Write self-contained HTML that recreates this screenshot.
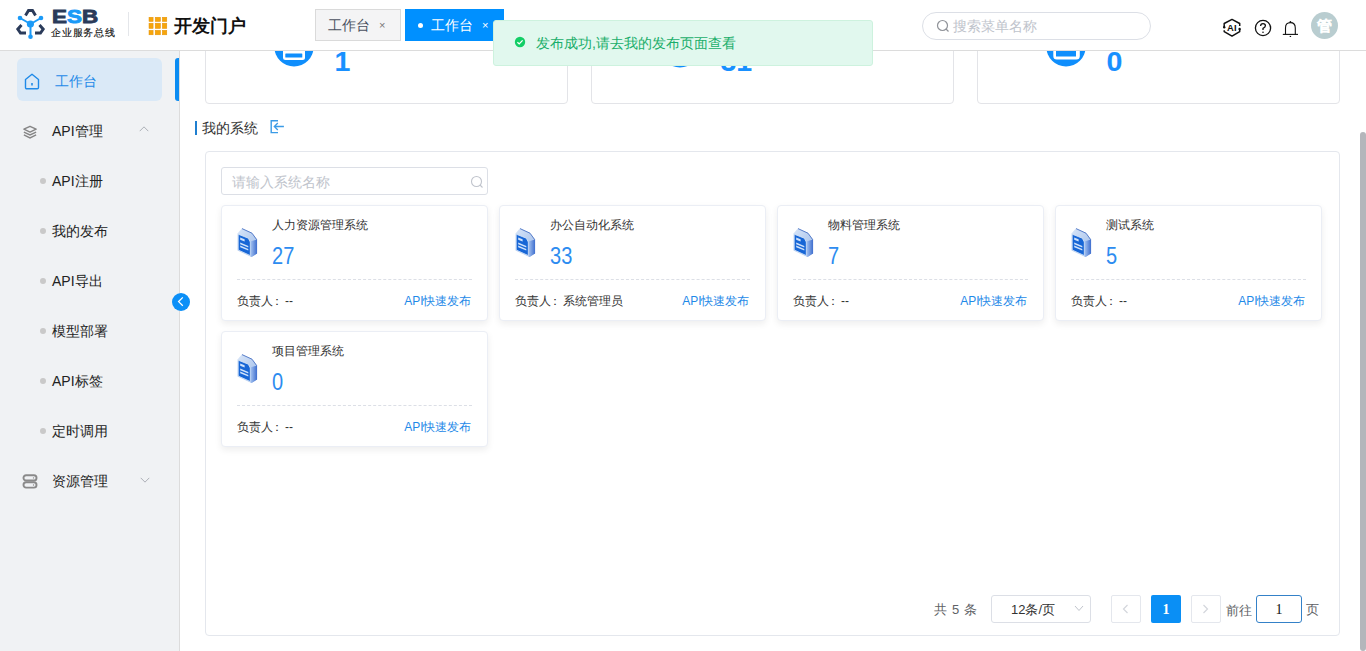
<!DOCTYPE html>
<html><head><meta charset="utf-8">
<style>
*{box-sizing:border-box;margin:0;padding:0}
html,body{width:1366px;height:651px;overflow:hidden;background:#fff;font-family:"Liberation Sans",sans-serif;color:#303133}
.abs{position:absolute}
#header{position:absolute;left:0;top:0;width:1366px;height:51px;background:#fff;border-bottom:1px solid #dcdcdc;z-index:5}
#side{position:absolute;left:0;top:51px;width:180px;height:600px;background:#f0f2f4;border-right:1px solid #dcdcdc}
#main{position:absolute;left:180px;top:51px;width:1186px;height:600px;overflow:hidden;background:#fff}
.menu{position:absolute;left:0;width:179px;height:50px;font-size:14px;color:#222;line-height:50px}
.menu .t{position:absolute;left:52px;top:0}
.sub .dot{position:absolute;left:40px;top:22px;width:6px;height:6px;border-radius:50%;background:#c9c9c9}
.stat{position:absolute;top:-40px;width:363px;height:93px;border:1px solid #e3e4e8;border-radius:4px;background:#fff}
.stat .num{position:absolute;left:128.5px;top:33.5px;font-size:28.5px;-webkit-text-stroke:0.1px currentColor;font-weight:bold;color:#1890ff;line-height:30px}
.card{position:absolute;width:267px;height:116px;border:1px solid #ebeef5;border-radius:4px;background:#fff;box-shadow:0 3px 7px rgba(0,0,0,0.07)}
.card .ti{position:absolute;left:50px;top:11px;font-size:12px;color:#333;line-height:16px}
.card .n{position:absolute;left:50px;top:36px;font-size:23px;color:#2d8cf0;line-height:28px;transform:scaleX(0.87);transform-origin:0 0}
.card .dash{position:absolute;left:15px;top:73px;width:235px;border-top:1px dashed #dcdfe6}
.card .f1{position:absolute;left:15px;top:87px;font-size:12px;color:#333;line-height:16px}
.card .f2{position:absolute;right:15.5px;top:87px;font-size:12px;color:#1f8ae8;line-height:16px}
.card .ic{position:absolute;left:15px;top:22px}
</style></head><body>
<div id="header">
  <!-- logo -->
  <svg class="abs" style="left:14px;top:7px" width="34" height="34" viewBox="14 7 34 34">
    <g fill="none" stroke="#2b3b5a" stroke-width="2.9" stroke-linejoin="miter">
      <path d="M25.5 15.5 L28.5 10.5 L32.5 10.5 L35.5 15.5"/>
      <path d="M21.5 25 L17.8 29.2 L20.5 33 L26 33"/>
      <path d="M39.5 25 L43.2 29.2 L40.5 33 L35 33"/>
    </g>
    <g stroke="#1b9af7" stroke-width="2" fill="#1b9af7">
      <line x1="20" y1="18" x2="30.5" y2="24"/>
      <line x1="41" y1="18" x2="30.5" y2="24"/>
      <line x1="30.5" y1="24" x2="30.5" y2="36.5"/>
      <circle cx="20" cy="18" r="2.3" stroke="none"/>
      <circle cx="41" cy="18" r="2.3" stroke="none"/>
      <circle cx="30.4" cy="24" r="3.6" stroke="none"/>
      <circle cx="30.5" cy="36.8" r="2.3" stroke="none"/>
    </g>
  </svg>
  <div class="abs" style="left:51.5px;top:5.5px;font-size:19px;font-weight:bold;letter-spacing:0px;color:#2b3b5a;line-height:21px;-webkit-text-stroke:0.9px currentColor;transform:scaleX(1.18);transform-origin:0 0">E<span style="color:#1b9af7">S</span>B</div><!---->
  <div class="abs" style="left:51px;top:26.5px;font-size:10.4px;letter-spacing:0.75px;font-weight:normal;color:#111;line-height:12px;-webkit-text-stroke:0.15px #111">企业服务总线</div>
  <div class="abs" style="left:128px;top:12px;width:1px;height:24px;background:#e4e6ea"></div>
  <svg class="abs" style="left:148px;top:17px" width="20" height="19" viewBox="0 0 20 19"><g fill="#f7a50a" stroke="#e3920c" stroke-width="0.5"><rect x="1" y="0.2" width="4.1" height="4.3"/><rect x="7.2" y="0.2" width="5.3" height="4.3"/><rect x="14.3" y="0.2" width="4.5" height="4.3"/><rect x="1" y="6.2" width="4.1" height="5.3"/><rect x="7.2" y="6.2" width="5.3" height="5.3"/><rect x="14.3" y="6.2" width="4.5" height="5.3"/><rect x="1" y="13.3" width="4.1" height="4.5"/><rect x="7.2" y="13.3" width="5.3" height="4.5"/><rect x="14.3" y="13.3" width="4.5" height="4.5"/></g></svg>
  <div class="abs" style="left:174px;top:14px;font-size:18px;font-weight:bold;color:#111;line-height:24px">开发门户</div>
  <!-- tabs -->
  <div class="abs" style="left:315px;top:9px;width:86px;height:32px;background:#f4f4f5;border:1px solid #dadada"></div>
  <div class="abs" style="left:328px;top:16px;font-size:14px;color:#495060;line-height:18px">工作台</div>
  <div class="abs" style="left:379px;top:16px;font-size:11px;color:#777;line-height:18px">×</div>
  <div class="abs" style="left:405px;top:9px;width:99px;height:32px;background:#0090ff"></div>
  <div class="abs" style="left:418px;top:23px;width:5px;height:5px;border-radius:50%;background:#fff"></div>
  <div class="abs" style="left:431px;top:16px;font-size:14px;color:#fff;line-height:18px">工作台</div>
  <div class="abs" style="left:482px;top:16px;font-size:11px;color:#fff;line-height:18px">×</div>
  <!-- search -->
  <div class="abs" style="left:922px;top:12px;width:229px;height:28px;border:1px solid #dcdfe6;border-radius:14px"></div>
  <svg class="abs" style="left:936px;top:19px" width="14" height="14" viewBox="0 0 14 14"><circle cx="6.5" cy="6.5" r="5" fill="none" stroke="#909399" stroke-width="1.2"/><line x1="10" y1="10" x2="12.5" y2="12.5" stroke="#909399" stroke-width="1.2"/></svg>
  <div class="abs" style="left:953px;top:17px;font-size:14px;color:#c0c4cc;line-height:18px">搜索菜单名称</div>
  <!-- icons -->
  <svg class="abs" style="left:1222px;top:18px" width="20" height="20" viewBox="0 0 20 20">
    <path d="M2.2 9.2 L2.2 5.5 L10 1.4 L17.7 5.5 L17.7 7.9" fill="none" stroke="#111" stroke-width="1.5" stroke-linejoin="round"/>
    <path d="M17.7 11 L17.7 13.6 L10 18.1 L2.2 13.6 L2.2 12.2" fill="none" stroke="#111" stroke-width="1.5" stroke-linejoin="round"/>
    <circle cx="2.2" cy="9.3" r="1.2" fill="#111"/><circle cx="17.6" cy="11" r="1.2" fill="#111"/>
    <text x="9.8" y="12.9" text-anchor="middle" font-family="Liberation Sans" font-weight="bold" font-size="9.4" fill="#111">AI</text>
  </svg>
  <svg class="abs" style="left:1254px;top:19px" width="18" height="18" viewBox="0 0 18 18"><circle cx="9" cy="9" r="7.6" fill="none" stroke="#111" stroke-width="1.3"/><path d="M6.6 7 Q6.6 4.6 9 4.6 Q11.4 4.6 11.4 6.8 Q11.4 8.4 9 9.4 L9 11" fill="none" stroke="#111" stroke-width="1.3"/><circle cx="9" cy="13.2" r="0.8" fill="#111"/></svg>
  <svg class="abs" style="left:1282px;top:20px" width="17" height="18" viewBox="0 0 17 18"><path d="M3.5 14.4 L3.5 8 Q3.5 2.6 8.4 2.6 Q13.3 2.6 13.3 8 L13.3 14.4" fill="none" stroke="#111" stroke-width="1.1"/><line x1="0.8" y1="14.4" x2="16" y2="14.4" stroke="#111" stroke-width="1.1"/><circle cx="8.4" cy="2" r="0.9" fill="#111"/><rect x="7.7" y="15.9" width="1.4" height="1.1" fill="#111"/></svg>
  <div class="abs" style="left:1311px;top:12px;width:27px;height:27px;border-radius:50%;background:#b9cdd0;color:#fff;font-size:15px;font-weight:bold;text-align:center;line-height:28px;-webkit-text-stroke:0.2px #fff">管</div>
</div>

<div id="side">
  <div class="abs" style="left:17px;top:7px;width:145px;height:43px;border-radius:6px;background:#dae9f7"></div>
  <svg class="abs" style="left:23.5px;top:22px" width="16" height="17" viewBox="0 0 16 17"><path d="M1.5 6.5 L8 1.2 L14.5 6.5 L14.5 14.5 Q14.5 15.8 13.2 15.8 L2.8 15.8 Q1.5 15.8 1.5 14.5 Z" fill="none" stroke="#1f8ae8" stroke-width="1.4" stroke-linejoin="round"/><line x1="8" y1="10" x2="8" y2="12.5" stroke="#1f8ae8" stroke-width="1.6"/></svg>
  <div class="abs" style="left:55px;top:21px;font-size:14px;color:#1f8ae8;line-height:18px">工作台</div>
  <div class="abs" style="left:175px;top:7px;width:4px;height:43px;border-radius:3px 0 0 3px;background:#0b8cf2"></div>

  <div class="menu" style="top:55px">
    <svg class="abs" style="left:23px;top:18.5px" width="14" height="14" viewBox="0 0 16 15"><path d="M8 1 L15 4.3 L8 7.6 L1 4.3 Z" fill="none" stroke="#858585" stroke-width="1.6" stroke-linejoin="round"/><path d="M1 7.6 L8 10.9 L15 7.6" fill="none" stroke="#858585" stroke-width="1.6"/><path d="M1 10.9 L8 14.2 L15 10.9" fill="none" stroke="#858585" stroke-width="1.6"/></svg>
    <span class="t">API管理</span>
    <svg class="abs" style="left:139px;top:20px" width="10" height="6" viewBox="0 0 11 7"><path d="M0.5 6 L5.5 1 L10.5 6" fill="none" stroke="#a8abb2" stroke-width="1.1"/></svg>
  </div>
  <div class="menu sub" style="top:105px"><i class="dot"></i><span class="t">API注册</span></div>
  <div class="menu sub" style="top:155px"><i class="dot"></i><span class="t">我的发布</span></div>
  <div class="menu sub" style="top:205px"><i class="dot"></i><span class="t">API导出</span></div>
  <div class="menu sub" style="top:255px"><i class="dot"></i><span class="t">模型部署</span></div>
  <div class="menu sub" style="top:305px"><i class="dot"></i><span class="t">API标签</span></div>
  <div class="menu sub" style="top:355px"><i class="dot"></i><span class="t">定时调用</span></div>
  <div class="menu" style="top:405px">
    <svg class="abs" style="left:22px;top:18px" width="16" height="15" viewBox="0 0 16 15"><rect x="1.5" y="1.2" width="13" height="5.3" rx="2.6" fill="none" stroke="#8a8a8a" stroke-width="1.9"/><rect x="1.5" y="8.3" width="13" height="5.3" rx="2.6" fill="none" stroke="#8a8a8a" stroke-width="1.9"/><circle cx="11.5" cy="3.9" r="0.7" fill="#8a8a8a"/><circle cx="11.5" cy="11" r="0.7" fill="#8a8a8a"/></svg>
    <span class="t">资源管理</span>
    <svg class="abs" style="left:139.5px;top:20.5px" width="10" height="6" viewBox="0 0 11 7"><path d="M0.5 1 L5.5 6 L10.5 1" fill="none" stroke="#a8abb2" stroke-width="1.1"/></svg>
  </div>
</div>

<div id="main">
  <div class="stat" style="left:25px">
    <svg class="abs" style="left:68px;top:14px" width="41" height="41" viewBox="0 0 41 41"><circle cx="20" cy="21" r="19.6" fill="#0f8efc"/><rect x="9" y="12" width="22" height="22" rx="2.5" fill="#fff"/><rect x="11.3" y="27.5" width="17" height="4" rx="0.5" fill="#0f8efc"/></svg>
    <div class="num">1</div>
  </div>
  <div class="stat" style="left:411px">
    <svg class="abs" style="left:68px;top:15px" width="41" height="41" viewBox="0 0 41 41"><circle cx="20" cy="21" r="19.6" fill="#0f8efc"/></svg>
    <div class="num">31</div></div>
  <div class="stat" style="left:797px">
    <svg class="abs" style="left:68px;top:14px" width="41" height="41" viewBox="0 0 41 41"><circle cx="20" cy="21" r="19.6" fill="#0f8efc"/><rect x="7.3" y="10" width="26.5" height="23.5" rx="3.5" fill="#fff"/><rect x="10" y="10" width="20" height="20.5" fill="#0f8efc"/><path d="M15 23 L25 16" stroke="#fff" stroke-width="2.2"/></svg>
    <div class="num">0</div></div>

  <div class="abs" style="left:15px;top:70px;width:2px;height:14px;background:#1f7fd0"></div>
  <div class="abs" style="left:22px;top:68px;font-size:14px;color:#333;line-height:18px">我的系统</div>
  <svg class="abs" style="left:90px;top:69px" width="15" height="14" viewBox="0 0 15 14"><path d="M8 0.8 L1.2 0.8 L1.2 12.6 L8 12.6" fill="none" stroke="#3b9be6" stroke-width="1.4"/><path d="M13.9 6.5 L4.3 6.5 M7.8 3 L4.3 6.5 L7.8 10" fill="none" stroke="#3b9be6" stroke-width="1.3"/></svg>

  <div class="abs" style="left:25px;top:100px;width:1135px;height:485px;border:1px solid #e4e7ed;border-radius:4px"></div>
  <div class="abs" style="left:41px;top:116px;width:267px;height:28px;border:1px solid #dcdfe6;border-radius:3px"></div>
  <div class="abs" style="left:52px;top:122px;font-size:14px;color:#c0c4cc;line-height:18px">请输入系统名称</div>
  <svg class="abs" style="left:290px;top:124px" width="14" height="14" viewBox="0 0 14 14"><circle cx="6.5" cy="6.5" r="5" fill="none" stroke="#c0c4cc" stroke-width="1.1"/><line x1="10" y1="10" x2="12.5" y2="12.5" stroke="#c0c4cc" stroke-width="1.1"/></svg>
<div class="card" style="left:41px;top:154px"><svg class="ic" width="21" height="30" viewBox="0 0 21 30"><defs><linearGradient id="gs" x1="0" x2="1" y1="0" y2="0"><stop offset="0" stop-color="#a9c6f2"/><stop offset="1" stop-color="#3f6fcf"/></linearGradient><linearGradient id="gt" x1="0" x2="1" y1="0" y2="1"><stop offset="0" stop-color="#d9e6f8"/><stop offset="1" stop-color="#9dbbe9"/></linearGradient></defs><path d="M0.5 5.5 L5 0.2 L15 5 L20 11.5 L20 25.5 L14.5 29 L0.5 22.5 Z" fill="url(#gt)"/><path d="M5 0.6 L15 5.2 L19.6 11.5 L19.6 25.5" fill="none" stroke="#4a72c4" stroke-width="0.9"/><path d="M13.3 13.5 L20 11.5 L20 25.5 L14.5 29 L13.3 28 Z" fill="url(#gs)"/><path d="M1.2 6.2 L11.3 10.2 L13.3 14 L13.3 27.6 L1.2 22 Z" fill="#1766d6" stroke="#d5e4f8" stroke-width="0.8"/><path d="M3.2 9.6 L7.6 11.3 L7.6 13.4 L3.2 11.7 Z" fill="#cfe2fb"/><path d="M3.2 14.6 L11.3 18 L11.3 19.6 L3.2 16.2 Z" fill="#cfe2fb"/><path d="M3.2 17.6 L11.3 21 L11.3 22.6 L3.2 19.2 Z" fill="#cfe2fb"/></svg><div class="ti">人力资源管理系统</div><div class="n">27</div><div class="dash"></div><div class="f1">负责人<span style="position:relative;left:-2.5px">：</span>--</div><div class="f2">API快速发布</div></div>
<div class="card" style="left:319px;top:154px"><svg class="ic" width="21" height="30" viewBox="0 0 21 30"><defs><linearGradient id="gs" x1="0" x2="1" y1="0" y2="0"><stop offset="0" stop-color="#a9c6f2"/><stop offset="1" stop-color="#3f6fcf"/></linearGradient><linearGradient id="gt" x1="0" x2="1" y1="0" y2="1"><stop offset="0" stop-color="#d9e6f8"/><stop offset="1" stop-color="#9dbbe9"/></linearGradient></defs><path d="M0.5 5.5 L5 0.2 L15 5 L20 11.5 L20 25.5 L14.5 29 L0.5 22.5 Z" fill="url(#gt)"/><path d="M5 0.6 L15 5.2 L19.6 11.5 L19.6 25.5" fill="none" stroke="#4a72c4" stroke-width="0.9"/><path d="M13.3 13.5 L20 11.5 L20 25.5 L14.5 29 L13.3 28 Z" fill="url(#gs)"/><path d="M1.2 6.2 L11.3 10.2 L13.3 14 L13.3 27.6 L1.2 22 Z" fill="#1766d6" stroke="#d5e4f8" stroke-width="0.8"/><path d="M3.2 9.6 L7.6 11.3 L7.6 13.4 L3.2 11.7 Z" fill="#cfe2fb"/><path d="M3.2 14.6 L11.3 18 L11.3 19.6 L3.2 16.2 Z" fill="#cfe2fb"/><path d="M3.2 17.6 L11.3 21 L11.3 22.6 L3.2 19.2 Z" fill="#cfe2fb"/></svg><div class="ti">办公自动化系统</div><div class="n">33</div><div class="dash"></div><div class="f1">负责人<span style="position:relative;left:-2.5px">：</span>系统管理员</div><div class="f2">API快速发布</div></div>
<div class="card" style="left:597px;top:154px"><svg class="ic" width="21" height="30" viewBox="0 0 21 30"><defs><linearGradient id="gs" x1="0" x2="1" y1="0" y2="0"><stop offset="0" stop-color="#a9c6f2"/><stop offset="1" stop-color="#3f6fcf"/></linearGradient><linearGradient id="gt" x1="0" x2="1" y1="0" y2="1"><stop offset="0" stop-color="#d9e6f8"/><stop offset="1" stop-color="#9dbbe9"/></linearGradient></defs><path d="M0.5 5.5 L5 0.2 L15 5 L20 11.5 L20 25.5 L14.5 29 L0.5 22.5 Z" fill="url(#gt)"/><path d="M5 0.6 L15 5.2 L19.6 11.5 L19.6 25.5" fill="none" stroke="#4a72c4" stroke-width="0.9"/><path d="M13.3 13.5 L20 11.5 L20 25.5 L14.5 29 L13.3 28 Z" fill="url(#gs)"/><path d="M1.2 6.2 L11.3 10.2 L13.3 14 L13.3 27.6 L1.2 22 Z" fill="#1766d6" stroke="#d5e4f8" stroke-width="0.8"/><path d="M3.2 9.6 L7.6 11.3 L7.6 13.4 L3.2 11.7 Z" fill="#cfe2fb"/><path d="M3.2 14.6 L11.3 18 L11.3 19.6 L3.2 16.2 Z" fill="#cfe2fb"/><path d="M3.2 17.6 L11.3 21 L11.3 22.6 L3.2 19.2 Z" fill="#cfe2fb"/></svg><div class="ti">物料管理系统</div><div class="n">7</div><div class="dash"></div><div class="f1">负责人<span style="position:relative;left:-2.5px">：</span>--</div><div class="f2">API快速发布</div></div>
<div class="card" style="left:875px;top:154px"><svg class="ic" width="21" height="30" viewBox="0 0 21 30"><defs><linearGradient id="gs" x1="0" x2="1" y1="0" y2="0"><stop offset="0" stop-color="#a9c6f2"/><stop offset="1" stop-color="#3f6fcf"/></linearGradient><linearGradient id="gt" x1="0" x2="1" y1="0" y2="1"><stop offset="0" stop-color="#d9e6f8"/><stop offset="1" stop-color="#9dbbe9"/></linearGradient></defs><path d="M0.5 5.5 L5 0.2 L15 5 L20 11.5 L20 25.5 L14.5 29 L0.5 22.5 Z" fill="url(#gt)"/><path d="M5 0.6 L15 5.2 L19.6 11.5 L19.6 25.5" fill="none" stroke="#4a72c4" stroke-width="0.9"/><path d="M13.3 13.5 L20 11.5 L20 25.5 L14.5 29 L13.3 28 Z" fill="url(#gs)"/><path d="M1.2 6.2 L11.3 10.2 L13.3 14 L13.3 27.6 L1.2 22 Z" fill="#1766d6" stroke="#d5e4f8" stroke-width="0.8"/><path d="M3.2 9.6 L7.6 11.3 L7.6 13.4 L3.2 11.7 Z" fill="#cfe2fb"/><path d="M3.2 14.6 L11.3 18 L11.3 19.6 L3.2 16.2 Z" fill="#cfe2fb"/><path d="M3.2 17.6 L11.3 21 L11.3 22.6 L3.2 19.2 Z" fill="#cfe2fb"/></svg><div class="ti">测试系统</div><div class="n">5</div><div class="dash"></div><div class="f1">负责人<span style="position:relative;left:-2.5px">：</span>--</div><div class="f2">API快速发布</div></div>
<div class="card" style="left:41px;top:280px"><svg class="ic" width="21" height="30" viewBox="0 0 21 30"><defs><linearGradient id="gs" x1="0" x2="1" y1="0" y2="0"><stop offset="0" stop-color="#a9c6f2"/><stop offset="1" stop-color="#3f6fcf"/></linearGradient><linearGradient id="gt" x1="0" x2="1" y1="0" y2="1"><stop offset="0" stop-color="#d9e6f8"/><stop offset="1" stop-color="#9dbbe9"/></linearGradient></defs><path d="M0.5 5.5 L5 0.2 L15 5 L20 11.5 L20 25.5 L14.5 29 L0.5 22.5 Z" fill="url(#gt)"/><path d="M5 0.6 L15 5.2 L19.6 11.5 L19.6 25.5" fill="none" stroke="#4a72c4" stroke-width="0.9"/><path d="M13.3 13.5 L20 11.5 L20 25.5 L14.5 29 L13.3 28 Z" fill="url(#gs)"/><path d="M1.2 6.2 L11.3 10.2 L13.3 14 L13.3 27.6 L1.2 22 Z" fill="#1766d6" stroke="#d5e4f8" stroke-width="0.8"/><path d="M3.2 9.6 L7.6 11.3 L7.6 13.4 L3.2 11.7 Z" fill="#cfe2fb"/><path d="M3.2 14.6 L11.3 18 L11.3 19.6 L3.2 16.2 Z" fill="#cfe2fb"/><path d="M3.2 17.6 L11.3 21 L11.3 22.6 L3.2 19.2 Z" fill="#cfe2fb"/></svg><div class="ti">项目管理系统</div><div class="n">0</div><div class="dash"></div><div class="f1">负责人<span style="position:relative;left:-2.5px">：</span>--</div><div class="f2">API快速发布</div></div>
  <div class="abs" style="left:754px;top:550px;font-size:13px;color:#606266;line-height:18px;word-spacing:1.5px">共 5 条</div>
  <div class="abs" style="left:811px;top:544px;width:100px;height:28px;border:1px solid #dcdfe6;border-radius:3px"></div>
  <div class="abs" style="left:831px;top:550px;font-size:13px;color:#333;line-height:18px">12条/页</div>
  <svg class="abs" style="left:894px;top:554px" width="10" height="7" viewBox="0 0 10 7"><path d="M1 1 L5 5.5 L9 1" fill="none" stroke="#c0c4cc" stroke-width="1"/></svg>
  <div class="abs" style="left:931px;top:544px;width:30px;height:28px;border:1px solid #e4e7ed;border-radius:2px;background:#fff"></div>
  <svg class="abs" style="left:942px;top:553px" width="7" height="10" viewBox="0 0 7 10"><path d="M5.5 1 L1.5 5 L5.5 9" fill="none" stroke="#d3d6dc" stroke-width="1.2"/></svg>
  <div class="abs" style="left:971px;top:544px;width:30px;height:28px;border-radius:2px;background:#0a8ff5;color:#fff;font-family:'Liberation Serif',serif;font-size:14px;font-weight:bold;text-align:center;line-height:30px">1</div>
  <div class="abs" style="left:1011px;top:544px;width:30px;height:28px;border:1px solid #e4e7ed;border-radius:2px;background:#fff"></div>
  <svg class="abs" style="left:1022px;top:553px" width="7" height="10" viewBox="0 0 7 10"><path d="M1.5 1 L5.5 5 L1.5 9" fill="none" stroke="#d3d6dc" stroke-width="1.2"/></svg>
  <div class="abs" style="left:1046px;top:550.5px;font-size:13px;color:#606266;line-height:18px">前往</div>
  <div class="abs" style="left:1076px;top:544px;width:46px;height:28px;border:1px solid #3481c8;border-radius:3px;font-family:'Liberation Serif',serif;font-size:14px;color:#111;text-align:center;line-height:27px">1</div>
  <div class="abs" style="left:1126px;top:550px;font-size:13px;color:#606266;line-height:18px">页</div>
</div>
<div class="abs" style="left:1360px;top:132px;width:6px;height:519px;border-radius:3px;background:#b4b6bb"></div>
<div class="abs" style="left:172px;top:293px;width:18px;height:18px;border-radius:50%;background:#0b8ff7"></div>
<svg class="abs" style="left:172px;top:293px" width="18" height="18" viewBox="0 0 18 18"><path d="M10.8 4.4 L6.6 8.6 L10.8 12.8" fill="none" stroke="#fff" stroke-width="1.3"/></svg>
<div class="abs" style="left:493px;top:20px;width:380px;height:46px;background:#e1f8ee;border:1px solid #cdf2de;border-radius:3px;z-index:10">
  <svg class="abs" style="left:19.5px;top:15px" width="12" height="12" viewBox="0 0 12 12"><circle cx="6" cy="6" r="5.2" fill="#13ce66"/><path d="M3.4 6.2 L5.2 7.9 L8.6 4.4" fill="none" stroke="#fff" stroke-width="1.3"/></svg>
  <div class="abs" style="left:42px;top:13px;font-size:14px;color:#1aae6a;line-height:18px">发布成功,请去我的发布页面查看</div>
</div>
</body></html>
